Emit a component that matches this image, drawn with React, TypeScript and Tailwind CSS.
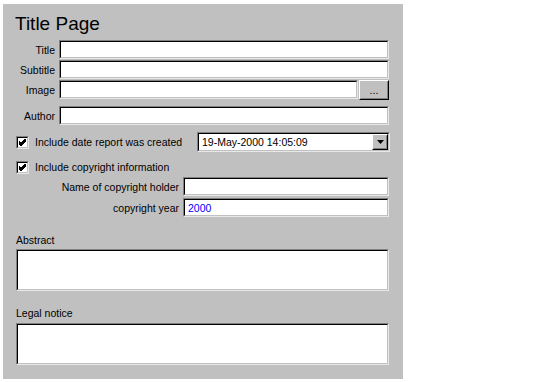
import type { ReactNode } from 'react';

// classic sunken field: grey/black top-left, light bottom-right
const Sunken = ({ className = '', children }: { className?: string; children?: ReactNode }) => (
    <div className={`border border-t-[#808080] border-l-[#808080] border-b-[#e8e8e8] border-r-[#e8e8e8] ${className}`}>
        <div className="h-full w-full border border-t-black border-l-black border-b-[#c0c0c0] border-r-[#c0c0c0] bg-white flex items-center overflow-hidden">
            {children}
        </div>
    </div>
);

const Raised = ({ className = '', children }: { className?: string; children?: ReactNode }) => (
    <div className={`border border-t-white border-l-white border-b-black border-r-black bg-[#c0c0c0] ${className}`}>
        <div className="h-full w-full border border-t-[#c0c0c0] border-l-[#c0c0c0] border-b-[#808080] border-r-[#808080] flex items-center justify-center">
            {children}
        </div>
    </div>
);

const CheckBox = () => (
    <Sunken className="w-[13px] h-[13px] shrink-0">
        <svg width="9" height="9" viewBox="0 0 9 9" className="mx-auto">
            <path d="M1 3.5 L3 5.5 L7.5 1 M1 4.5 L3 6.5 L7.5 2 M1 5.5 L3 7.5 L7.5 3" stroke="black" strokeWidth="1" fill="none" shapeRendering="crispEdges" />
        </svg>
    </Sunken>
);

const FieldRow = ({ label, children }: { label: string; children: ReactNode }) => (
    <div className="flex items-center h-[19px] gap-[4px]">
        <span className="w-[52px] text-right shrink-0">{label}</span>
        {children}
    </div>
);

export default function App() {
    return (
        <div className="w-[551px] h-[382px] bg-white pt-[4px] pl-[3px] text-[10.5px] leading-[14px] text-black" style={{ fontFamily: '"Liberation Sans", Arial, sans-serif' }}>
            <div className="w-[400px] h-[375px] bg-[#c0c0c0] pt-[8px] flex flex-col">
                <h1 className="pl-[12px] h-[24px] text-[19px] leading-[24px]">Title Page</h1>

                {/* basic fields */}
                <div className="mt-[4px] flex flex-col gap-[1px]">
                    <FieldRow label="Title">
                        <Sunken className="w-[330px] h-[19px]" />
                    </FieldRow>
                    <FieldRow label="Subtitle">
                        <Sunken className="w-[330px] h-[19px]" />
                    </FieldRow>
                    <FieldRow label="Image">
                        <div className="flex gap-[1px]">
                            <Sunken className="w-[299px] h-[19px]" />
                            <Raised className="w-[30px] h-[20px]">
                                <span className="leading-none pt-[2px]">...</span>
                            </Raised>
                        </div>
                    </FieldRow>
                </div>
                <div className="mt-[7px]">
                    <FieldRow label="Author">
                        <Sunken className="w-[330px] h-[19px]" />
                    </FieldRow>
                </div>

                {/* date */}
                <div className="mt-[7px] h-[20px] flex items-center pl-[13px]">
                    <CheckBox />
                    <span className="ml-[6px] w-[162px]">Include date report was created</span>
                    <Sunken className="w-[193px] h-[20px]">
                        <span className="pl-[3px] flex-1">19-May-2000 14:05:09</span>
                        <Raised className="w-[16px] h-[16px]">
                            <svg width="7" height="4" viewBox="0 0 7 4">
                                <path d="M0 0 H7 L3.5 4 Z" fill="black" />
                            </svg>
                        </Raised>
                    </Sunken>
                </div>

                {/* copyright */}
                <div className="mt-[8px] h-[14px] flex items-center pl-[13px]">
                    <CheckBox />
                    <span className="ml-[6px]">Include copyright information</span>
                </div>
                <div className="mt-[3px] flex flex-col gap-[2px]">
                    <div className="flex items-center h-[19px] gap-[4px]">
                        <span className="w-[176px] text-right">Name of copyright holder</span>
                        <Sunken className="w-[206px] h-[19px]" />
                    </div>
                    <div className="flex items-center h-[19px] gap-[4px]">
                        <span className="w-[176px] text-right">copyright year</span>
                        <Sunken className="w-[206px] h-[19px]">
                            <span className="pl-[3px] text-[#0000ff]">2000</span>
                        </Sunken>
                    </div>
                </div>

                {/* text areas */}
                <div className="pl-[13px]">
                    <div className="mt-[16px]">Abstract</div>
                    <Sunken className="mt-[2px] w-[373px] h-[42px]" />
                    <div className="mt-[15px]">Legal notice</div>
                    <Sunken className="mt-[3px] w-[373px] h-[42px]" />
                </div>
            </div>
        </div>
    );
}
